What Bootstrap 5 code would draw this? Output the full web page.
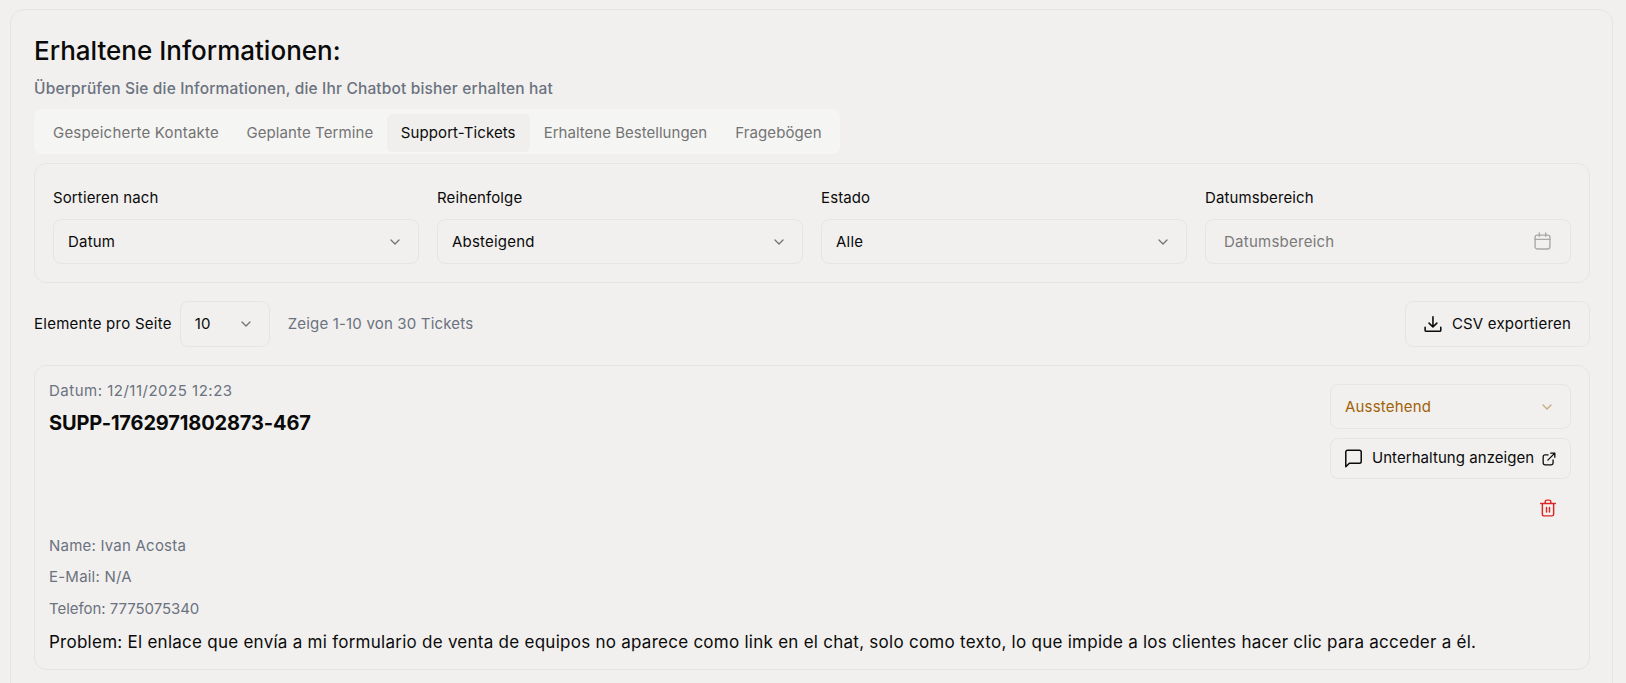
<!DOCTYPE html>
<html lang="de">
<head>
    <meta charset="UTF-8">
    <meta name="viewport" content="width=device-width, initial-scale=1.0">
    <title>Erhaltene Informationen</title>
    <link rel="stylesheet" href="https://cdn.jsdelivr.net/npm/bootstrap@5.3.2/dist/css/bootstrap.min.css">
    <style>
        body {
            background-color: #f1f0ee;
            color: #0a0a0a;
            font-family: "Inter", "Liberation Sans", sans-serif;
            font-size: 15px;
            padding: 9px 13px 0 10px;
            height: 683px;
            overflow: hidden;
        }
        .outer-panel {
            border: 1px solid #e6e5e3;
            border-radius: 14px;
            padding: 23px 22px 0 23px;
            height: 700px;
        }
        .page-title { font-size: 26px; font-weight: 500; line-height: 36px; margin: 0 0 10px; }
        .page-sub { font-size: 15.5px; font-weight: 500; letter-spacing: .16px; line-height: 20px; color: #6b7280; margin: 0 0 10px; }
        .tab-bar {
            background: #f5f5f4;
            border-radius: 8px;
            padding: 5px 4px 2px;
            width: 806px;
            height: 45px;
            flex-wrap: nowrap;
        }
        .tab-bar .nav-link {
            color: #737373;
            font-size: 15px;
            font-weight: 400;
            letter-spacing: .1px;
            line-height: 20px;
            padding: 9px 14px;
            height: 38px;
            border-radius: 6px;
            white-space: nowrap;
        }
        .tab-bar .nav-item:first-child .nav-link { padding-left: 15px; letter-spacing: .2px; }
        .tab-bar .nav-item:nth-child(2) .nav-link { padding: 9px 13.5px; }
        .tab-bar .nav-item:nth-child(4) .nav-link { letter-spacing: .02px; }
        .tab-bar .nav-link.active { background: #f0efed; color: #0a0a0a; }
        .filter-box {
            border: 1px solid #e6e5e3;
            border-radius: 12px;
            padding: 18px;
            margin-top: 9px;
            height: 120px;
            gap: 18px;
        }
        .filter-col { flex: 1 1 0; min-width: 0; }
        .filter-label { font-size: 15px; letter-spacing: .12px; line-height: 20px; margin: 6px 0 11px; display: block; }
        .sel-box.form-select, .sel-box.form-control {
            background-color: transparent;
            border: 1px solid #e6e5e3;
            border-radius: 8px;
            font-size: 15px;
            letter-spacing: .2px;
            color: #0a0a0a;
            height: 45px;
            padding: 1px 14px 0;
            box-shadow: none;
        }
        .sel-box.form-select {
            background-image: url("data:image/svg+xml,%3csvg xmlns='http://www.w3.org/2000/svg' viewBox='0 0 16 16'%3e%3cpath fill='none' stroke='%23737373' stroke-linecap='round' stroke-linejoin='round' stroke-width='1.3' d='M4 6l4 4 4-4'/%3e%3c/svg%3e");
            background-size: 16px 16px;
            background-position: right 15px center;
        }
        .sel-box.form-control { padding: 0 14px 0 18px; }
        .sel-box.form-control::placeholder { color: #7a7a7a; letter-spacing: .25px; }
        .date-wrap { position: relative; }
        .date-wrap svg { position: absolute; right: 20px; top: 13px; }
        .per-page { margin-top: 18px; height: 46px; }
        .per-label { letter-spacing: .25px; }
        .per-sel { width: 90px; flex: none; height: 46px !important; }
        .per-info { color: #6b7280; letter-spacing: .18px; margin-left: 18px; }
        .out-btn {
            background: transparent;
            border: 1px solid #e6e5e3;
            border-radius: 8px;
            color: #0a0a0a;
            font-size: 15px;
            letter-spacing: .2px;
            display: flex;
            align-items: center;
            white-space: nowrap;
        }
        .export-btn { height: 46px; width: 185px; gap: 10px; padding: 0 18px; }
        .ticket-box {
            border: 1px solid #e6e5e3;
            border-radius: 12px;
            margin-top: 18px;
            height: 305px;
            padding: 14px 18px 0 14px;
        }
        .ticket-date { color: #6b7280; letter-spacing: .5px; line-height: 20px; margin-top: 1px; }
        .ticket-id { font-size: 20px; font-weight: 700; letter-spacing: -.14px; line-height: 28px; margin-top: 8px; }
        .ticket-side { width: 241px; flex: none; padding-top: 4px; }
        .status-sel.form-select {
            color: #a16207;
            background-image: url("data:image/svg+xml,%3csvg xmlns='http://www.w3.org/2000/svg' viewBox='0 0 16 16'%3e%3cpath fill='none' stroke='%23c9a877' stroke-linecap='round' stroke-linejoin='round' stroke-width='1.3' d='M4 6l4 4 4-4'/%3e%3c/svg%3e");
        }
        .convo-btn { height: 41px; width: 241px; margin-top: 9px; padding: 0 14px 0 13px; letter-spacing: .05px; }
        .convo-txt { margin-left: 9px; margin-right: auto; }
        .trash-row { height: 40px; padding-right: 14px; margin-top: 9px; }
        .info-line { color: #6b7280; letter-spacing: .22px; line-height: 20px; margin: 0 0 11px; }
        .phone-line { letter-spacing: -.05px; margin-top: 12px; }
        .problem-line { font-size: 17px; letter-spacing: .26px; line-height: 24px; margin: 1px 0 0; white-space: nowrap; }
    </style>
</head>
<body>
    <div class="outer-panel">
        <h1 class="page-title">Erhaltene Informationen:</h1>
        <p class="page-sub">Überprüfen Sie die Informationen, die Ihr Chatbot bisher erhalten hat</p>

        <ul class="nav tab-bar">
            <li class="nav-item"><a class="nav-link" href="#">Gespeicherte Kontakte</a></li>
            <li class="nav-item"><a class="nav-link" href="#">Geplante Termine</a></li>
            <li class="nav-item"><a class="nav-link active" href="#">Support-Tickets</a></li>
            <li class="nav-item"><a class="nav-link" href="#">Erhaltene Bestellungen</a></li>
            <li class="nav-item"><a class="nav-link" href="#">Fragebögen</a></li>
        </ul>

        <div class="filter-box d-flex">
            <div class="filter-col">
                <label class="filter-label">Sortieren nach</label>
                <select class="form-select sel-box"><option>Datum</option></select>
            </div>
            <div class="filter-col">
                <label class="filter-label">Reihenfolge</label>
                <select class="form-select sel-box"><option>Absteigend</option></select>
            </div>
            <div class="filter-col">
                <label class="filter-label">Estado</label>
                <select class="form-select sel-box"><option>Alle</option></select>
            </div>
            <div class="filter-col">
                <label class="filter-label">Datumsbereich</label>
                <div class="date-wrap">
                    <input class="form-control sel-box" type="text" placeholder="Datumsbereich">
                    <svg width="17" height="18" viewBox="0 0 16 17" fill="none" stroke="#a8a8a8" stroke-width="1.3" stroke-linecap="round" stroke-linejoin="round"><rect x="1" y="3" width="14" height="13" rx="2"/><path d="M5 1v3M11 1v3M1 7h14"/></svg>
                </div>
            </div>
        </div>

        <div class="per-page d-flex align-items-center">
            <span class="per-label me-2">Elemente pro Seite</span>
            <select class="form-select sel-box per-sel"><option>10</option></select>
            <span class="per-info">Zeige 1-10 von 30 Tickets</span>
            <button class="btn out-btn export-btn ms-auto" type="button">
                <svg width="18" height="18" viewBox="0 0 16 16" fill="none" stroke="#0a0a0a" stroke-width="1.4" stroke-linecap="round" stroke-linejoin="round"><path d="M8 1.5v9M4.5 7.2 8 10.7l3.5-3.5M1 11v2.5a1 1 0 0 0 1 1h12a1 1 0 0 0 1-1V11"/></svg>
                CSV exportieren
            </button>
        </div>

        <div class="ticket-box">
            <div class="d-flex justify-content-between">
                <div>
                    <div class="ticket-date">Datum: 12/11/2025 12:23</div>
                    <div class="ticket-id">SUPP-1762971802873-467</div>
                </div>
                <div class="ticket-side">
                    <select class="form-select sel-box status-sel"><option>Ausstehend</option></select>
                    <button class="btn out-btn convo-btn" type="button">
                        <svg width="19" height="19" viewBox="0 0 16 16" fill="none" stroke="#0a0a0a" stroke-width="1.25" stroke-linecap="round" stroke-linejoin="round"><path d="M14.500 10.500a1.500 1.500 0 0 1-1.500 1.500H4.500l-3 3V2.500A1.500 1.500 0 0 1 3 1h10a1.500 1.500 0 0 1 1.500 1.500z"/></svg>
                        <span class="convo-txt">Unterhaltung anzeigen</span>
                        <svg width="14" height="14" viewBox="0 0 12 12" fill="none" stroke="#0a0a0a" stroke-width="1.1" stroke-linecap="round" stroke-linejoin="round"><path d="M9.500 6.800v2.700a1.500 1.500 0 0 1-1.500 1.500H2.500A1.500 1.500 0 0 1 1 9.500V4a1.500 1.500 0 0 1 1.500-1.500h2.700M7.500 1H11v3.500M5 7l6-6"/></svg>
                    </button>
                    <div class="trash-row d-flex justify-content-end align-items-center">
                        <svg width="18" height="18" viewBox="0 0 16 16" fill="none" stroke="#dc2626" stroke-width="1.3" stroke-linecap="round" stroke-linejoin="round"><path d="M1.500 4h13M13 4v9.500a1.500 1.500 0 0 1-1.500 1.500h-7A1.500 1.500 0 0 1 3 13.500V4M5.500 4V2.500A1.500 1.500 0 0 1 7 1h2a1.500 1.500 0 0 1 1.500 1.500V4M6.700 7.500v4M9.300 7.500v4"/></svg>
                    </div>
                </div>
            </div>
            <div class="info-line mt-2">Name: Ivan Acosta</div>
            <div class="info-line">E-Mail: N/A</div>
            <div class="info-line phone-line">Telefon: 7775075340</div>
            <p class="problem-line">Problem: El enlace que envía a mi formulario de venta de equipos no aparece como link en el chat, solo como texto, lo que impide a los clientes hacer clic para acceder a él.</p>
        </div>
    </div>
    <script src="https://cdn.jsdelivr.net/npm/bootstrap@5.3.2/dist/js/bootstrap.bundle.min.js"></script>
</body>
</html>
